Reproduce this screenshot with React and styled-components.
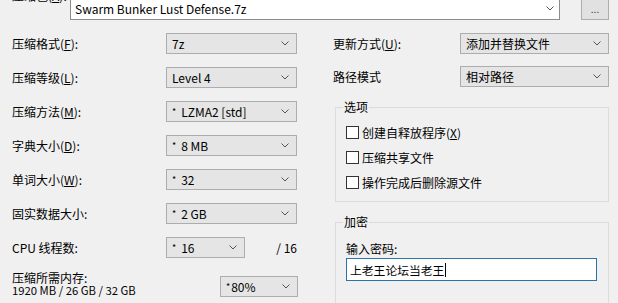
import React from "react";
import styled, { createGlobalStyle } from "styled-components";

const GlobalStyle = createGlobalStyle`
html, body {
  margin: 0;
  padding: 0;
  background: #f0f0f0;
}
body {
  font-family: "Noto Sans CJK SC", "Liberation Sans", sans-serif;
  font-size: 12px;
  color: #000;
  overflow: hidden;
}
`;

const Chevron = ({ color = "#555" }) => (
    <svg width="8" height="5" viewBox="0 0 8 5">
        <path d="M0.5 0.5 L4 4 L7.5 0.5" fill="none" stroke={color} strokeWidth="1" />
    </svg>
);

const Select = ({ value, star, tight }) => (
    <StyledSelect>
        <span>
            {star && <Star tight={tight}>*</Star>}
            {value}
        </span>
        <Chevron />
    </StyledSelect>
);

const Check = ({ label }) => (
    <CheckRow>
        <CheckBox />
        <span>{label}</span>
    </CheckRow>
);

const leftRows = [
    { label: <>压缩格式(<u>F</u>):</>, value: "7z" },
    { label: <>压缩等级(<u>L</u>):</>, value: "Level 4" },
    { label: <>压缩方法(<u>M</u>):</>, value: "LZMA2 [std]", star: true },
    { label: <>字典大小(<u>D</u>):</>, value: "8 MB", star: true },
    { label: <>单词大小(<u>W</u>):</>, value: "32", star: true },
    { label: <>固实数据大小:</>, value: "2 GB", star: true },
];

const App = () => {
    return (
        <Dialog>
            <GlobalStyle />
            <TopRow>
                <ArchiveLabel>压缩包(<u>A</u>):</ArchiveLabel>
                <PathCombo>
                    <span>Swarm Bunker Lust Defense.7z</span>
                    <Chevron />
                </PathCombo>
                <BrowseButton>...</BrowseButton>
            </TopRow>
            <Columns>
                <LeftCol>
                    {leftRows.map((row, i) => (
                        <FieldRow key={i}>
                            <Label>{row.label}</Label>
                            <Select value={row.value} star={row.star} />
                        </FieldRow>
                    ))}
                    <CpuRow>
                        <Label>CPU 线程数:</Label>
                        <Select value="16" star />
                        <Total>/ 16</Total>
                    </CpuRow>
                    <MemoryRow>
                        <MemoryLabel>
                            <div>压缩所需内存:</div>
                            <MemoryFigures>1920 MB / 26 GB / 32 GB</MemoryFigures>
                        </MemoryLabel>
                        <Select value="80%" star tight />
                    </MemoryRow>
                </LeftCol>
                <RightCol>
                    <RightRow>
                        <Label>更新方式(<u>U</u>):</Label>
                        <Select value="添加并替换文件" />
                    </RightRow>
                    <RightRow>
                        <Label>路径模式</Label>
                        <Select value="相对路径" />
                    </RightRow>
                    <Group>
                        <Legend>选项</Legend>
                        <OptionsBody>
                            <Check label={<>创建自释放程序(<u>X</u>)</>} />
                            <Check label="压缩共享文件" />
                            <Check label="操作完成后删除源文件" />
                        </OptionsBody>
                    </Group>
                    <EncryptGroup>
                        <Legend>加密</Legend>
                        <EncryptBody>
                            <Label>输入密码:</Label>
                            <PasswordInput>
                                上老王论坛当老王
                                <Caret />
                            </PasswordInput>
                        </EncryptBody>
                    </EncryptGroup>
                </RightCol>
            </Columns>
        </Dialog>
    );
};

const Dialog = styled.div`
width: 618px;
height: 303px;
overflow: hidden;
box-sizing: border-box;
padding: 0 9px 0 12px;
background: #f0f0f0;
`;

const TopRow = styled.div`
display: flex;
align-items: flex-start;
height: 23px;
margin-top: -3px;
`;

const ArchiveLabel = styled.div`
width: 58px;
flex: none;
line-height: 16px;
margin-top: -9px;
white-space: nowrap;
`;

const PathCombo = styled.div`
width: 490px;
height: 23px;
box-sizing: border-box;
flex: none;
display: flex;
align-items: center;
justify-content: space-between;
padding: 0 5px 0 4px;
background: #fff;
border: 1px solid #8c8c8c;
`;

const BrowseButton = styled.div`
width: 28px;
height: 23px;
box-sizing: border-box;
margin-left: 21px;
display: flex;
align-items: center;
justify-content: center;
background: #e1e1e1;
border: 1px solid #adadad;
font-size: 10px;
color: #333;
`;

const Columns = styled.div`
display: grid;
grid-template-columns: 286px 276px;
column-gap: 35px;
margin-top: 13px;
`;

const LeftCol = styled.div`
display: flex;
flex-direction: column;
gap: 13px;
`;

const FieldRow = styled.div`
display: grid;
grid-template-columns: 154px 131px;
align-items: center;
height: 21px;
`;

const CpuRow = styled(FieldRow)`
grid-template-columns: 154px 79px 1fr;
`;

const Total = styled.div`
text-align: right;
padding-right: 1px;
`;

const MemoryRow = styled.div`
display: grid;
grid-template-columns: 208px 78px;
align-items: end;
`;

const MemoryLabel = styled.div`
line-height: 13px;
white-space: nowrap;
`;

const MemoryFigures = styled.div`
font-size: 11.3px;
line-height: 13px;
`;

const Label = styled.div`
line-height: 16px;
white-space: nowrap;
`;

const StyledSelect = styled.div`
height: 21px;
box-sizing: border-box;
display: flex;
align-items: center;
justify-content: space-between;
padding: 0 7px 0 5px;
background: #e5e5e5;
border: 1px solid #adadad;
white-space: nowrap;
`;

const Star = styled.span`
display: inline-block;
font-size: 9px;
vertical-align: 2px;
margin-right: ${(p) => (p.tight ? "1px" : "5px")};
`;

const RightCol = styled.div`
display: flex;
flex-direction: column;
`;

const RightRow = styled.div`
display: grid;
grid-template-columns: 127px 149px;
align-items: center;
height: 21px;
& + & {
  margin-top: 12px;
}
`;

const Group = styled.fieldset`
margin: 13px 0 0 2px;
padding: 0;
border: 1px solid #dcdcdc;
min-width: 0;
`;

const EncryptGroup = styled(Group)`
height: 120px;
`;

const Legend = styled.legend`
margin-left: 7px;
padding: 0 1px;
line-height: 14px;
`;

const OptionsBody = styled.div`
display: flex;
flex-direction: column;
padding: 6px 10px 6px 10px;
`;

const CheckRow = styled.div`
display: flex;
align-items: center;
gap: 3px;
height: 25px;
white-space: nowrap;
`;

const CheckBox = styled.span`
width: 13px;
height: 13px;
box-sizing: border-box;
background: #fff;
border: 1px solid #333;
flex: none;
`;

const EncryptBody = styled.div`
display: flex;
flex-direction: column;
padding: 12px 10px 0 10px;
`;

const PasswordInput = styled.div`
margin-top: 1px;
width: 251px;
height: 23px;
box-sizing: border-box;
display: flex;
align-items: center;
padding-left: 3px;
background: #fff;
border: 1px solid #2a74aa;
font-size: 11.8px;
white-space: nowrap;
`;

const Caret = styled.span`
display: inline-block;
width: 1px;
height: 14px;
background: #000;
margin-left: 1px;
`;

export default App;
